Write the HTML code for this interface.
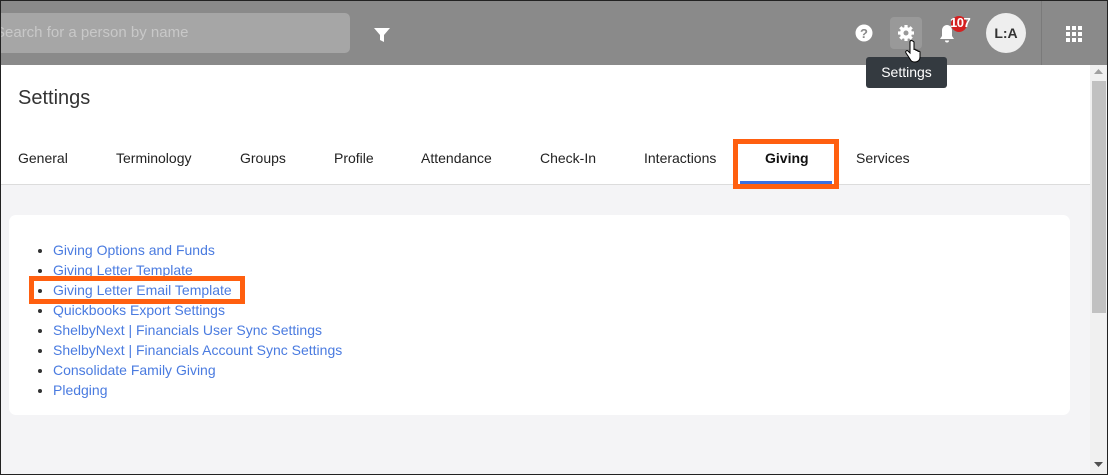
<!DOCTYPE html>
<html><head><style>
*{margin:0;padding:0;box-sizing:border-box}
body{width:1108px;height:475px;overflow:hidden;font-family:"Liberation Sans",Arial,sans-serif;background:#f4f4f6;position:relative}
.frame{position:absolute;left:0;top:0;width:1108px;height:475px;border:1px solid #222;z-index:10}
.hdr{position:absolute;left:0;top:0;width:1108px;height:65px;background:#8a8a8a}
.search{position:absolute;left:0;top:13px;width:350px;height:40px;background:#a6a6a6;border-radius:0 5px 5px 0;color:#c8c8c8;font-size:15px;line-height:40px;text-indent:-5px;overflow:hidden}
.white{position:absolute;left:0;top:65px;width:1090px;height:120px;background:#fff;border-bottom:1px solid #dcdcdc}
.title{position:absolute;left:18px;top:87px;font-size:20px;color:#333}
.tab{position:absolute;top:150px;font-size:14px;color:#222}
.card{position:absolute;left:9px;top:215px;width:1061px;height:200px;background:#fff;border-radius:7px}
ul{position:absolute;left:53px;top:240px;list-style:disc;font-size:14px;line-height:20px;color:#333}
li a{color:#4a7be0;text-decoration:none}
.ob{position:absolute;border:5px solid #ff5f0f}
.sb{position:absolute;left:1090px;top:65px;width:17px;height:409px;background:#f0f0f0}
.thumb{position:absolute;left:1092px;top:81px;width:14px;height:232px;background:#c1c1c1}
</style></head><body>
<div class="hdr">
<div class="search">Search for a person by name</div>
<svg style="position:absolute;left:374px;top:27px" width="16" height="16" viewBox="0 0 16 16"><path d="M0 1h16l-6 7v7l-4-2V8z" fill="#fff"/></svg>
<svg style="position:absolute;left:855px;top:24px" width="18" height="18" viewBox="0 0 18 18"><circle cx="9" cy="9" r="8.5" fill="#fff"/><text x="9" y="14" font-size="13" font-weight="bold" text-anchor="middle" fill="#8a8a8a" font-family="Liberation Sans">?</text></svg>
<div style="position:absolute;left:890px;top:17px;width:32px;height:32px;background:#999;border-radius:4px"></div>
<svg style="position:absolute;left:897px;top:24px" width="18" height="18" viewBox="0 0 18 18"><g fill="#fff"><circle cx="9" cy="9" r="6"/><g stroke="#fff" stroke-width="3.2"><path d="M9 1v16M1 9h16M3.3 3.3l11.4 11.4M14.7 3.3L3.3 14.7"/></g></g><circle cx="9" cy="9" r="2.5" fill="#999"/></svg>
<svg style="position:absolute;left:938px;top:24px" width="18" height="20" viewBox="0 0 18 20"><path d="M9 1c-3 0-5 2.5-5 5.5V12l-2 3h14l-2-3V6.5C14 3.5 12 1 9 1z M7 16.5a2 2 0 0 0 4 0z" fill="#fff"/></svg>
<div style="position:absolute;left:951px;top:16px;width:16px;height:16px;border-radius:50%;background:#d42020"></div>
<div style="position:absolute;left:950px;top:15px;font-size:13px;color:#fff;font-weight:bold;letter-spacing:-0.5px">107</div>
<div style="position:absolute;left:986px;top:13px;width:40px;height:40px;border-radius:50%;background:#eee;color:#333;font-weight:bold;font-size:14px;text-align:center;line-height:40px">L:A</div>
<div style="position:absolute;left:1041px;top:0;width:1px;height:65px;background:#7a7a7a"></div>
<svg style="position:absolute;left:1066px;top:26px" width="16" height="16" viewBox="0 0 16 16" fill="#fff"><rect x="0" y="0" width="4" height="4"/><rect x="6" y="0" width="4" height="4"/><rect x="12" y="0" width="4" height="4"/><rect x="0" y="6" width="4" height="4"/><rect x="6" y="6" width="4" height="4"/><rect x="12" y="6" width="4" height="4"/><rect x="0" y="12" width="4" height="4"/><rect x="6" y="12" width="4" height="4"/><rect x="12" y="12" width="4" height="4"/></svg>
</div>
<div class="white"></div>
<div class="title">Settings</div>
<div style="position:absolute;left:866px;top:57px;width:81px;height:31px;background:#343a40;border-radius:3px;color:#fff;font-size:14px;text-align:center;line-height:31px">Settings</div>
<svg style="position:absolute;left:905px;top:40px" width="16" height="24" viewBox="0 0 16 24"><path d="M5 2v11l-2-2c-1-1-3 0-2 2l4 6c1 2 2 3 5 3s5-2 5-5v-5c0-1-2-1-2 0v-1c0-1-2-1-2 0v-1c0-1-2-1-2 0V2C7 0 5 0 5 2z" fill="#fff" stroke="#000" stroke-width="1"/></svg>
<div class="tab" style="left:18px">General</div>
<div class="tab" style="left:116px">Terminology</div>
<div class="tab" style="left:240px">Groups</div>
<div class="tab" style="left:334px">Profile</div>
<div class="tab" style="left:421px">Attendance</div>
<div class="tab" style="left:540px">Check-In</div>
<div class="tab" style="left:644px">Interactions</div>
<div class="tab" style="left:765px;font-weight:bold;color:#111">Giving</div>
<div class="tab" style="left:856px">Services</div>
<div style="position:absolute;left:740px;top:181px;width:92px;height:3px;background:#3b6fe0"></div>
<div class="ob" style="left:733px;top:139px;width:106px;height:50px"></div>
<div class="card"></div>
<ul>
<li><a>Giving Options and Funds</a></li>
<li><a>Giving Letter Template</a></li>
<li><a>Giving Letter Email Template</a></li>
<li><a>Quickbooks Export Settings</a></li>
<li><a>ShelbyNext | Financials User Sync Settings</a></li>
<li><a>ShelbyNext | Financials Account Sync Settings</a></li>
<li><a>Consolidate Family Giving</a></li>
<li><a>Pledging</a></li>
</ul>
<div class="ob" style="left:29px;top:276px;width:216px;height:28px"></div>
<div class="sb"></div>
<div class="thumb"></div>
<svg style="position:absolute;left:1094px;top:69px" width="9" height="6"><path d="M0 5h9L4.5 0z" fill="#a0a0a0"/></svg>
<svg style="position:absolute;left:1094px;top:462px" width="9" height="6"><path d="M0 0h9L4.5 5z" fill="#505050"/></svg>
<div class="frame"></div>
</body></html>
